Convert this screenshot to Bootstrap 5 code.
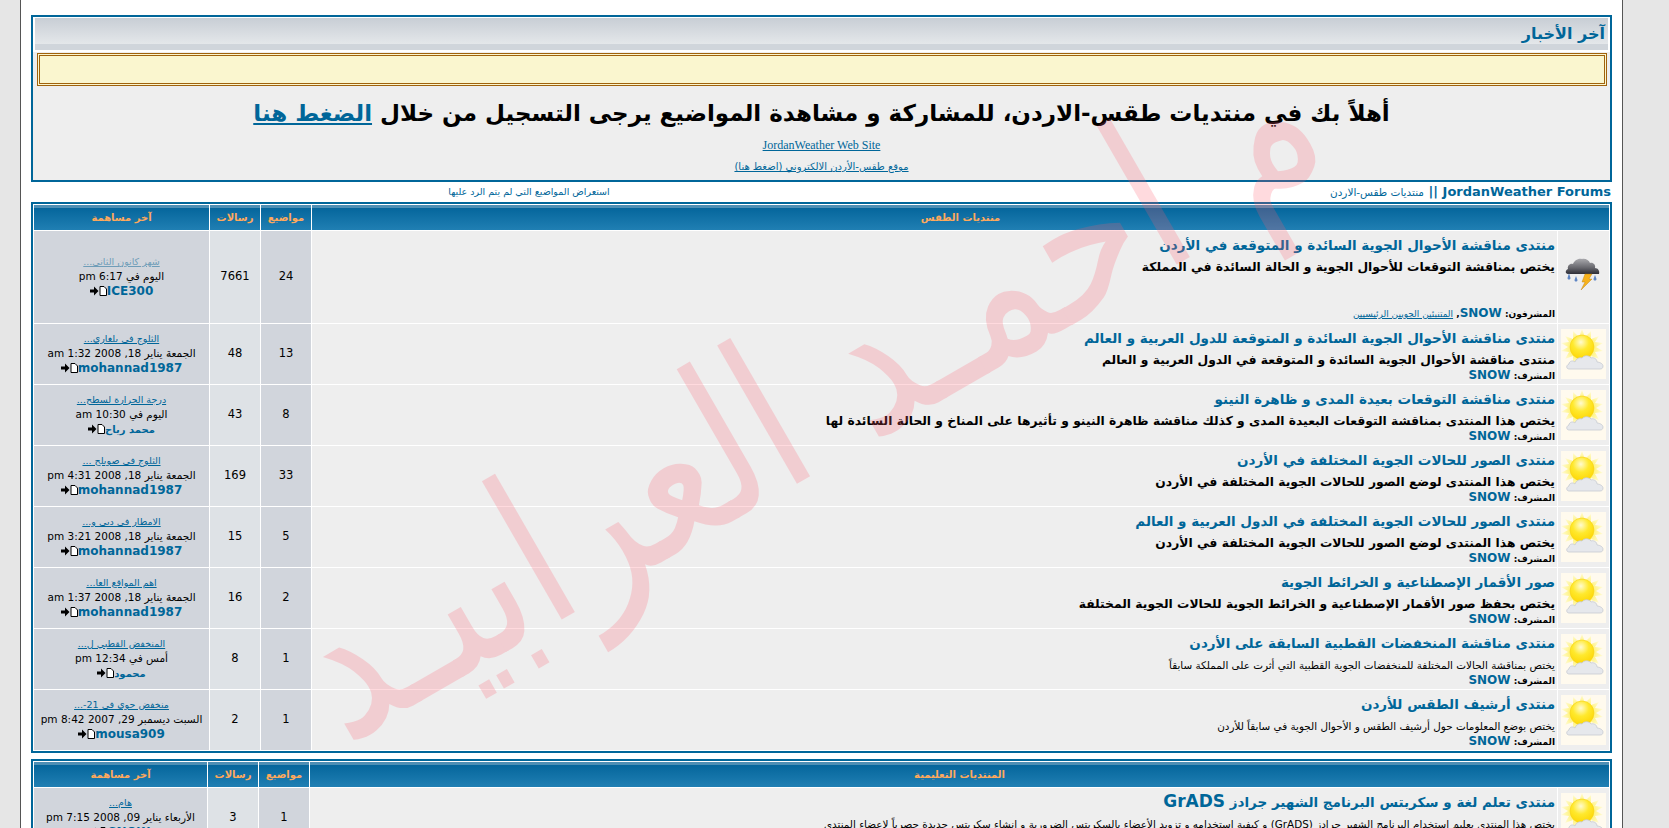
<!DOCTYPE html>
<html lang="ar" dir="rtl">
<head>
  <meta charset="UTF-8" />
  <title>JordanWeather Forums</title>
  <link href="https://cdn.jsdelivr.net/npm/bootstrap@5.3.0/dist/css/bootstrap.min.css" rel="stylesheet" />
  <style>
    html, body {
      height: 100%;
      overflow: hidden;
    }
    body {
      background: #e6e6e6;
      font-family: "DejaVu Sans", sans-serif;
      font-size: 11px;
      color: #000;
    }
    a {
      color: #006699;
    }
    .page-sheet {
      position: relative;
      width: 1603px;
      height: 828px;
      margin-left: 20px;
      margin-right: 46px;
      padding: 15px 10px 0 10px;
      background: #fff;
      border-left: 1px solid #555;
      border-right: 1px solid #555;
      overflow: hidden;
    }
    .news-box {
      height: 167px;
      background: #eee;
      border: 2px solid #006699;
    }
    .news-head {
      background: #fff;
      padding: 1px 2px 2px;
    }
    .news-title {
      height: 32px;
      padding: 0 3px 0 0;
      line-height: 31px;
      font-size: 16px;
      font-weight: 700;
      color: #006699;
      background: linear-gradient(#c8ced5 0, #e4e7ea 26px, #d0d5db 26px, #d0d5db 32px);
    }
    .notice-strip {
      height: 33px;
      margin: 1px 3px 0 4px;
      background: #faf6cf;
      border: 3px double #a0620c;
    }
    .welcome-line {
      margin: 13px 0 1px;
      line-height: 28px;
      font-size: 23px;
      font-weight: 700;
    }
    .site-link {
      line-height: 21px;
      font-size: 12px;
    }
    .site-link-en {
      font-family: "Liberation Serif", serif;
    }
    .site-link-ar {
      font-size: 10px;
    }
    .nav-strip {
      height: 20px;
      line-height: 20px;
      padding: 0 1px 0 0;
    }
    .nav-home {
      font-size: 13px;
      font-weight: 700;
      color: #006699;
    }
    .nav-home small {
      font-size: 10.5px;
      font-weight: 400;
    }
    .nav-unanswered {
      width: 330px;
      text-align: center;
      font-size: 9.5px;
      margin-left: 333px;
    }
    .forum-table {
      width: 1581px;
      table-layout: fixed;
      border-collapse: separate;
      border-spacing: 1px;
      border: 2px solid #006699;
      background: #fff;
    }
    .forum-table + .forum-table {
      margin-top: 6px;
    }
    .col-icon { width: 51px; }
    .col-count { width: 50px; }
    .col-last { width: 175px; }
    .col-last-narrow { width: 173px; }
    .forum-table th {
      height: 25px;
      padding: 0;
      text-align: center;
      font-size: 10px;
      font-weight: 700;
      color: #ffa95c;
      background: linear-gradient(#4d8fb5 0, #4d8fb5 3px, #05669c 3px, #207fb3 100%);
    }
    .forum-table td {
      height: 60px;
      padding: 0;
      text-align: center;
      vertical-align: middle;
    }
    .forum-table tr.tall-row td {
      height: 92px;
    }
    .forum-table td.cell-icon,
    .forum-table td.cell-main {
      background: #eee;
    }
    .forum-table td.cell-main {
      padding: 4px 2px 0;
      text-align: right;
      vertical-align: top;
    }
    .cell-count {
      font-size: 11.5px;
    }
    .forum-table td.cell-topics,
    .forum-table td.cell-last {
      background: #d1d5dc;
    }
    .forum-table td.cell-posts {
      background: #dee2e6;
    }
    .forum-name {
      display: block;
      height: 20px;
      line-height: 20px;
      font-size: 13.5px;
      font-weight: 700;
      color: #006699;
      text-decoration: none;
    }
    .forum-name span {
      font-size: 17px;
      line-height: 1;
    }
    .forum-desc {
      margin-top: 4px;
      line-height: 16px;
      font-size: 12.3px;
      font-weight: 700;
    }
    .forum-desc.thin {
      font-size: 10.4px;
      font-weight: 400;
    }
    .forum-mods {
      line-height: 14px;
      font-size: 9px;
      font-weight: 700;
    }
    .tall-row .forum-mods {
      margin-top: 31px;
    }
    .forum-mods a {
      font-size: 12px;
      text-decoration: none;
    }
    .forum-mods a.mods-group {
      font-size: 9px;
      font-weight: 400;
      text-decoration: underline;
    }
    .last-title {
      line-height: 14px;
      font-size: 9.5px;
    }
    .last-title .faded {
      color: #6f9db8;
    }
    .last-date {
      line-height: 14px;
      font-size: 10.5px;
    }
    .last-user {
      line-height: 16px;
      font-size: 12px;
      font-weight: 700;
    }
    .last-user a {
      text-decoration: none;
    }
    .last-user svg {
      vertical-align: -1px;
    }
    .name-ar {
      font-size: 10px;
    }
    .watermark {
      position: absolute;
      left: 785px;
      top: 395px;
      transform: translate(-50%, -50%) rotate(-30deg) scaleY(1.25);
      white-space: nowrap;
      font-size: 168px;
      line-height: 1;
      color: #ff5a6e;
      opacity: .22;
      pointer-events: none;
    }
  </style>
</head>
<body>
  <svg width="0" height="0" class="position-absolute">
    <defs>
      <radialGradient id="sunFill" cx=".45" cy=".3" r=".75">
        <stop offset="0" stop-color="#fffbd0" />
        <stop offset=".45" stop-color="#ffe92e" />
        <stop offset="1" stop-color="#fdd400" />
      </radialGradient>
      <radialGradient id="rayFill">
        <stop offset=".55" stop-color="#fff27a" />
        <stop offset="1" stop-color="#fffbd8" />
      </radialGradient>
      <linearGradient id="stormFill" x1="0" y1="0" x2="0" y2="1">
        <stop offset="0" stop-color="#a9a9ad" />
        <stop offset=".6" stop-color="#66666c" />
        <stop offset="1" stop-color="#2e2e36" />
      </linearGradient>
      <symbol id="iconSun" viewBox="0 0 45 50">
        <rect width="45" height="50" fill="#fffaee" />
        <polygon fill="url(#rayFill)" points="21,0 24,8 30,2 30,10 38,7 34,13 42,14 35,18 42,22 34,23 38,30 30,27 30,35 24,29 21,37 18,29 12,35 12,27 4,30 8,23 0,22 7,18 0,14 8,13 4,7 12,10 12,2 18,8" />
        <circle cx="21" cy="18" r="12" fill="url(#sunFill)" stroke="#f6d21a" stroke-width=".6" />
        <path d="M8 40c-3 0-3-4 0-5 0-3 4-4 6-2 1-3 4-5 7-4 2-3 7-3 9 0 3-1 6 1 6 4 3 0 6 2 6 4 0 2-1 3-3 3z" fill="#e6e8ec" stroke="#c6cad2" stroke-width=".8" />
      </symbol>
      <symbol id="iconStorm" viewBox="0 0 45 50">
        <path d="M7 22c-3 0-3-4 0-5-1-3 2-6 5-5 1-3 5-6 9-5 3-1 7 1 8 4 3-1 6 2 5 5 3 0 5 3 4 6z" fill="url(#stormFill)" />
        <polygon points="24,22 31,22 28,27 31,27 20,38 24,30 21,30" fill="#f6b21c" stroke="#b57a10" stroke-width=".4" />
        <path d="M8 21l-1.500 5c0 2 3 2 3 0zM15 24l-1.500 4c0 2 3 2 3 0zM34 23l-1.500 4c0 2 3 2 3 0z" fill="#5f86c4" />
      </symbol>
      <symbol id="iconLastPost" viewBox="0 0 17 10">
        <polygon points="0,3.500 4,3.500 4,0.500 8.500,5 4,9.500 4,6.500 0,6.500" fill="#000" />
        <path d="M10 .5h4l2.500 2.500v6.500h-6.500z" fill="#fff" stroke="#000" />
      </symbol>
    </defs>
  </svg>

  <div class="page-sheet">
    <div class="news-box">
      <div class="news-head">
        <div class="news-title">آخر الأخبار</div>
      </div>
      <div class="notice-strip"></div>
      <p class="welcome-line text-center">أهلاً بك في منتديات طقس-الاردن، للمشاركة و مشاهدة المواضيع يرجى التسجيل من خلال <a href="#">الضغط هنا</a></p>
      <div class="text-center mt-2">
        <div class="site-link site-link-en"><a href="#">JordanWeather Web Site</a></div>
        <div class="site-link site-link-ar"><a href="#">موقع طقس-الأردن الالكتروني (اضغط هنا)</a></div>
      </div>
    </div>

    <div class="nav-strip d-flex justify-content-between">
      <div class="nav-home">JordanWeather Forums || <small>منتديات طقس-الاردن</small></div>
      <div class="nav-unanswered"><a href="#" class="text-decoration-none">استعراض المواضيع التي لم يتم الرد عليها</a></div>
    </div>

    <div id="forumTables"></div>

    <div class="watermark">م احمـد العرابيـد</div>
  </div>

  <script>
    // rlm keeps the date tokens in the right-to-left order of the old board
    const rlm = '\u200F';
    const stamp = (day, rest) => day + ' ' + rest.split(' ').join(rlm + ' ');

    const sections = [
      {
        title: 'منتديات الطقس',
        lastCol: 'col-last',
        forums: [
          {
            tall: true, icon: 'iconStorm', faded: true,
            name: 'منتدى مناقشة الأحوال الجوية السائدة و المتوقعة في الأردن',
            desc: 'يختص بمناقشة التوقعات للأحوال الجوية و الحالة السائدة في المملكة',
            topics: 24, posts: 7661,
            last: 'شهر كانون الثاني...', date: stamp('اليوم في', '6:17 pm'), user: 'ICE300'
          },
          {
            name: 'منتدى مناقشة الأحوال الجوية السائدة و المتوقعة للدول العربية و العالم',
            desc: 'منتدى مناقشة الأحوال الجوية السائدة و المتوقعة في الدول العربية و العالم',
            topics: 13, posts: 48,
            last: 'الثلوج في بلغاري...', date: stamp('الجمعة يناير', '18, 2008 1:32 am'), user: 'mohannad1987'
          },
          {
            name: 'منتدى مناقشة التوقعات بعيدة المدى و ظاهرة النينو',
            desc: 'يختص هذا المنتدى بمناقشة التوقعات البعيدة المدى و كذلك مناقشة ظاهرة النينو و تأثيرها على المناخ و الحالة السائدة لها',
            topics: 8, posts: 43,
            last: 'درجة الحرارة لسطح...', date: stamp('اليوم في', '10:30 am'), user: 'محمد رياح', userAr: true
          },
          {
            name: 'منتدى الصور للحالات الجوية المختلفة في الأردن',
            desc: 'يختص هذا المنتدى لوضع الصور للحالات الجوية المختلفة في الأردن',
            topics: 33, posts: 169,
            last: 'الثلوج في صويلح ...', date: stamp('الجمعة يناير', '18, 2008 4:31 pm'), user: 'mohannad1987'
          },
          {
            name: 'منتدى الصور للحالات الجوية المختلفة في الدول العربية و العالم',
            desc: 'يختص هذا المنتدى لوضع الصور للحالات الجوية المختلفة في الأردن',
            topics: 5, posts: 15,
            last: 'الامطار في دبي و...', date: stamp('الجمعة يناير', '18, 2008 3:21 pm'), user: 'mohannad1987'
          },
          {
            name: 'صور الأقمار الإصطناعية و الخرائط الجوية',
            desc: 'يختص بحفظ صور الأقمار الإصطناعية و الخرائط الجوية للحالات الجوية المختلفة',
            topics: 2, posts: 16,
            last: 'اهم المواقع العا...', date: stamp('الجمعة يناير', '18, 2008 1:37 am'), user: 'mohannad1987'
          },
          {
            thin: true,
            name: 'منتدى مناقشة المنخفضات القطبية السابقة على الأردن',
            desc: 'يختص بمناقشة الحالات المختلفة للمنخفضات الجوية القطبية التي أثرت على المملكة سابقاً',
            topics: 1, posts: 8,
            last: 'المنخفض القطبي ل...', date: stamp('أمس في', '12:34 pm'), user: 'محمود', userAr: true
          },
          {
            thin: true,
            name: 'منتدى أرشيف الطقس للأردن',
            desc: 'يختص بوضع المعلومات حول أرشيف الطقس و الأحوال الجوية في سابقاً للأردن',
            topics: 1, posts: 2,
            last: 'منخفض جوي في 21-...', date: stamp('السبت ديسمبر', '29, 2007 8:42 pm'), user: 'mousa909'
          }
        ]
      },
      {
        title: 'المنتديات التعليمية',
        lastCol: 'col-last-narrow',
        forums: [
          {
            thin: true,
            name: 'منتدى تعلم لغة و سكربتس البرنامج الشهير جرادز <span>GrADS</span>',
            desc: 'يختص هذا المنتدى بعليم استخدام البرنامج الشهير جرادز (GrADS) و كيفية استخدامه و تزويد الأعضاء بالسكربتس الضرورية و إنشاء سكربتس جديدة حصرياً لإعضاء المنتدى',
            topics: 1, posts: 3,
            last: 'هام...', date: stamp('الأربعاء يناير', '09, 2008 7:15 pm'), user: 'SNOW'
          }
        ]
      }
    ];

    function forumRow(f) {
      const mods = f.tall
        ? 'المشرفون: <a href="#">SNOW</a>, <a href="#" class="mods-group">المتنبئين الجويين الرئيسيين</a>'
        : 'المشرف: <a href="#">SNOW</a>';
      return `
        <tr class="${f.tall ? 'tall-row' : ''}">
          <td class="cell-icon"><svg width="45" height="50" class="d-block mx-auto"><use href="#${f.icon || 'iconSun'}" /></svg></td>
          <td class="cell-main">
            <a href="#" class="forum-name">${f.name}</a>
            <div class="forum-desc ${f.thin ? 'thin' : ''}">${f.desc}</div>
            <div class="forum-mods">${mods}</div>
          </td>
          <td class="cell-count cell-topics">${f.topics}</td>
          <td class="cell-count cell-posts">${f.posts}</td>
          <td class="cell-last">
            <div class="last-title"><a href="#" class="${f.faded ? 'faded' : ''}">${f.last}</a></div>
            <div class="last-date">${f.date}</div>
            <div class="last-user"><a href="#" class="${f.userAr ? 'name-ar' : ''}">${f.user}</a><svg width="17" height="10"><use href="#iconLastPost" /></svg></div>
          </td>
        </tr>`;
    }

    document.getElementById('forumTables').innerHTML = sections.map(s => `
      <table class="forum-table">
        <colgroup>
          <col class="col-icon"><col><col class="col-count"><col class="col-count"><col class="${s.lastCol}">
        </colgroup>
        <thead>
          <tr><th colspan="2">${s.title}</th><th>مواضيع</th><th>رسالات</th><th>آخر مساهمة</th></tr>
        </thead>
        <tbody>${s.forums.map(forumRow).join('')}</tbody>
      </table>`).join('');
  </script>
  <script src="https://cdn.jsdelivr.net/npm/bootstrap@5.3.0/dist/js/bootstrap.bundle.min.js"></script>
</body>
</html>
